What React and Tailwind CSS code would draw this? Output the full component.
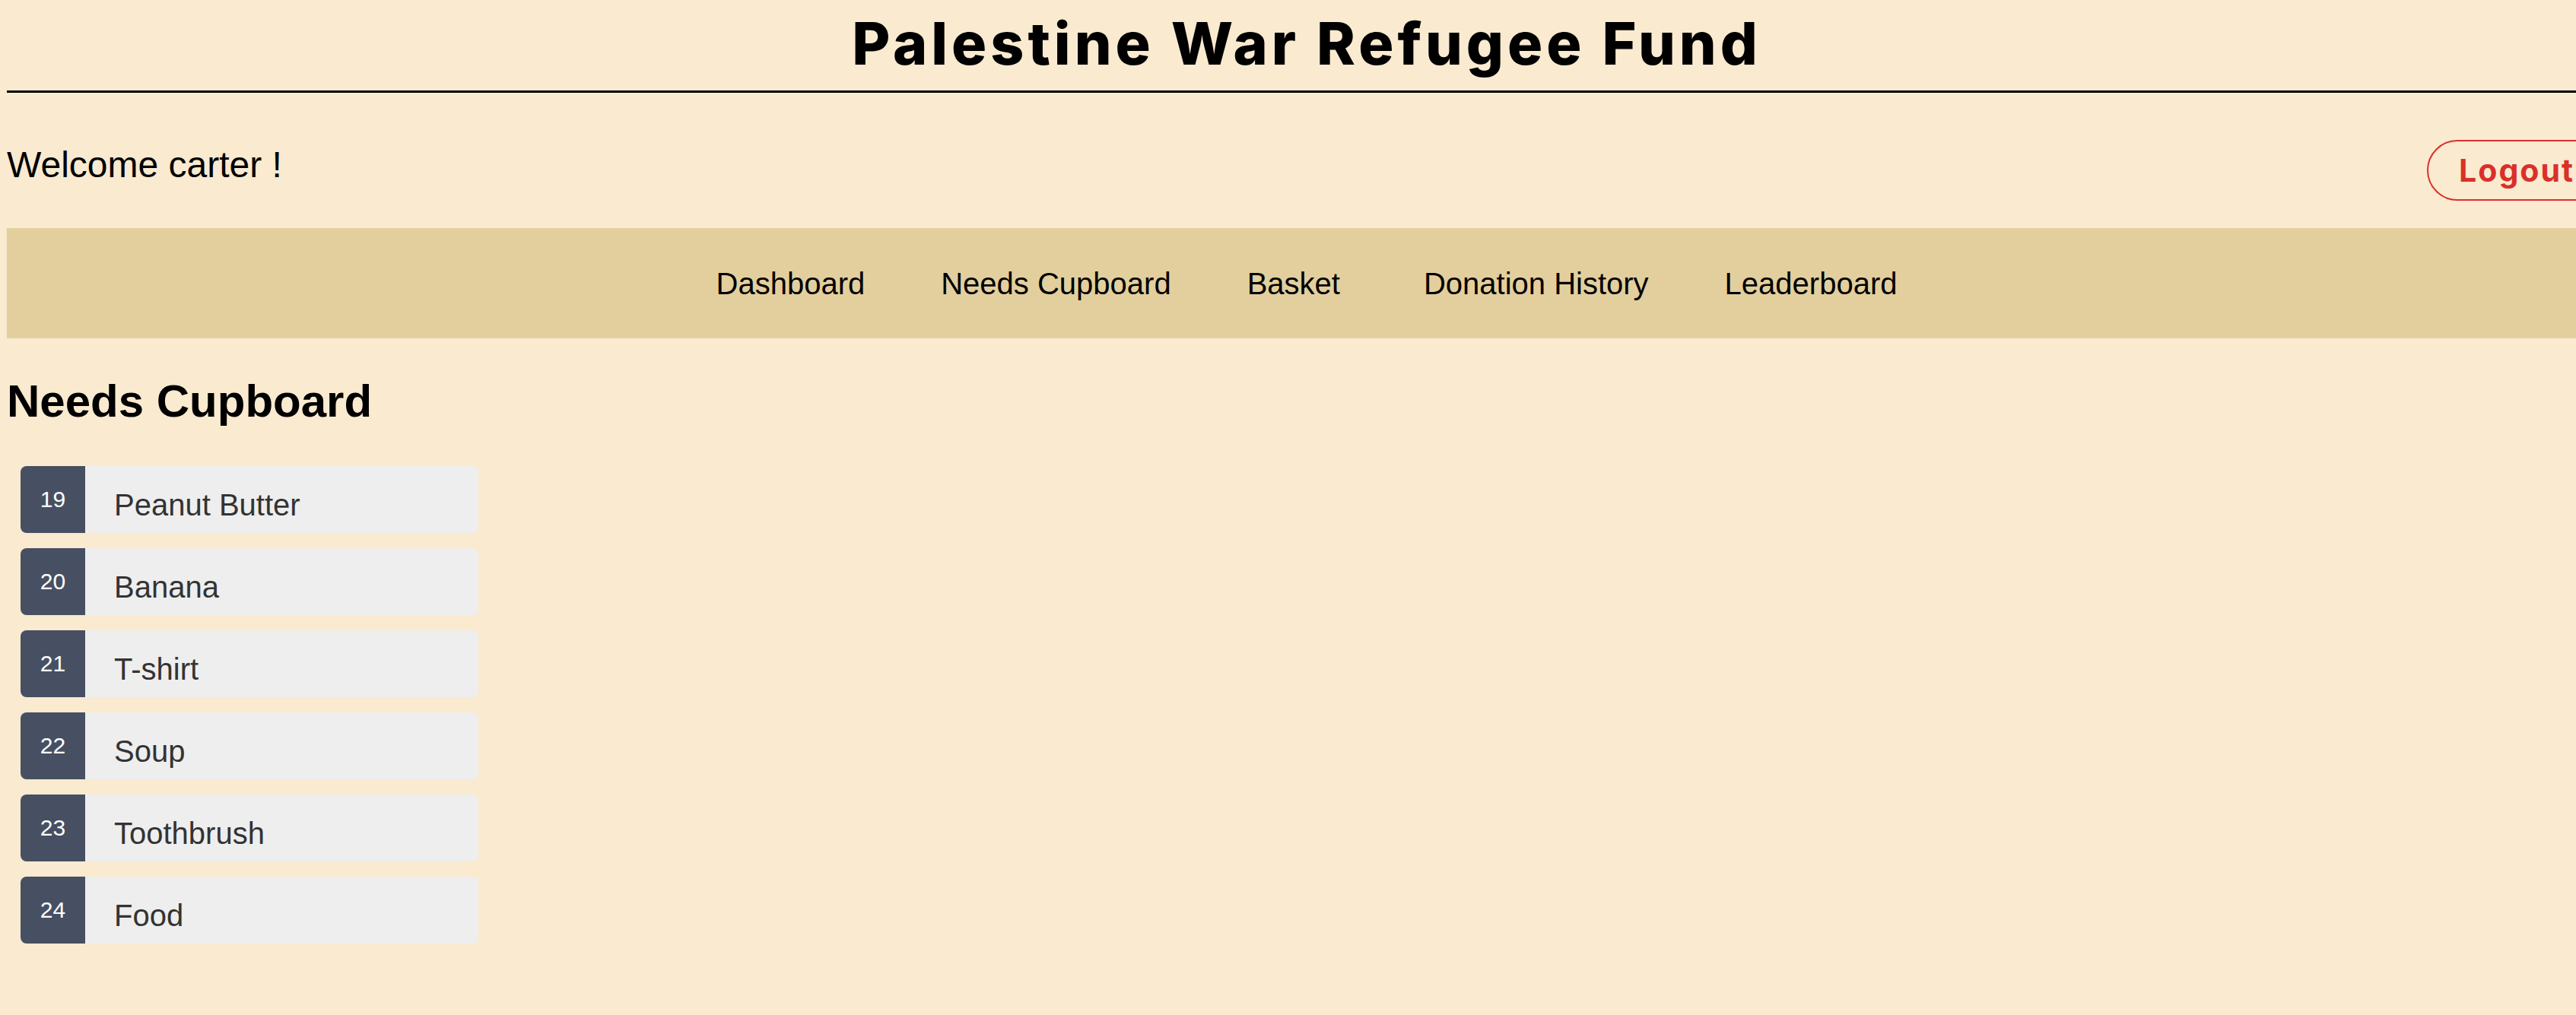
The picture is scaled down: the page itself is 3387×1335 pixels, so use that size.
const navLinks = ['Dashboard', 'Needs Cupboard', 'Basket', 'Donation History', 'Leaderboard'];

const needs = [
  { id: 19, name: 'Peanut Butter' },
  { id: 20, name: 'Banana' },
  { id: 21, name: 'T-shirt' },
  { id: 22, name: 'Soup' },
  { id: 23, name: 'Toothbrush' },
  { id: 24, name: 'Food' },
];

function NeedItem({ need }) {
  return (
    <li className="flex h-[88px] w-[602px] overflow-hidden rounded-lg bg-[#eeeeee]">
      <div className="flex w-[85px] shrink-0 items-center justify-center bg-[#475062] text-[30px] leading-none text-white">
        {need.id}
      </div>
      <div className="pl-[38px] pt-[31px] text-[40px] leading-none text-[#333333]">{need.name}</div>
    </li>
  );
}

export default function App() {
  return (
    <div className="min-h-screen w-full overflow-hidden bg-[#f9ead0] font-['Liberation_Sans',Arial,sans-serif] text-black">
      <div className="ml-[9px] w-[3418px]">
        <h1 className="border-b-[3px] border-black pb-[23px] pt-[19px] text-center font-['Inter',sans-serif] text-[77px] font-extrabold leading-none tracking-[5px]">
          Palestine War Refugee Fund
        </h1>

        <div className="flex items-start justify-between">
          <div className="mt-[71px] text-[48px] leading-none">Welcome carter !</div>
          <button className="mt-[62px] flex h-[80px] items-center rounded-full border-2 border-[#d9302a] pl-[40px] pr-[40px] font-['Inter',sans-serif] text-[41px] font-bold leading-none tracking-[2px] text-[#d9302a]">
            Logout
          </button>
        </div>

        <nav className="mt-[36px] flex h-[145px] items-center justify-center bg-[#e3cf9d]">
          {navLinks.map((link) => (
            <a
              key={link}
              className={link === 'Basket' ? 'pl-[50px] pr-[60px] text-[40px] leading-none' : 'px-[50px] text-[40px] leading-none'}
            >
              {link}
            </a>
          ))}
        </nav>

        <h2 className="mt-[53px] text-[60px] font-bold leading-none">Needs Cupboard</h2>

        <ul className="ml-[18px] mt-[55px] flex flex-col gap-[20px] pb-[60px]">
          {needs.map((need) => (
            <NeedItem key={need.id} need={need} />
          ))}
        </ul>
      </div>
    </div>
  );
}
